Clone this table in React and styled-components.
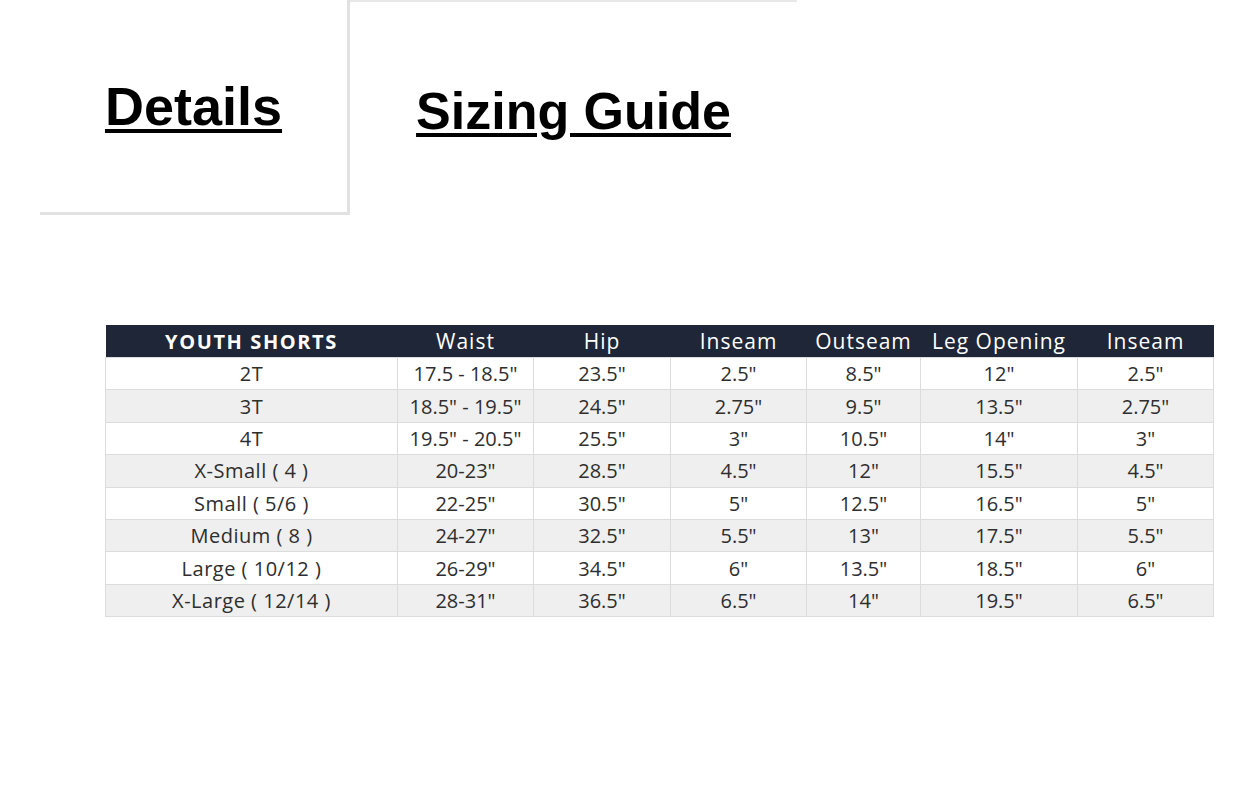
import styled, { createGlobalStyle } from "styled-components";

const columns = [
	{ label: "YOUTH SHORTS", width: 292, strong: true },
	{ label: "Waist", width: 136 },
	{ label: "Hip", width: 137 },
	{ label: "Inseam", width: 136 },
	{ label: "Outseam", width: 114 },
	{ label: "Leg Opening", width: 157 },
	{ label: "Inseam", width: 136 },
];

const rows = [
	["2T", "17.5 - 18.5\"", "23.5\"", "2.5\"", "8.5\"", "12\"", "2.5\""],
	["3T", "18.5\" - 19.5\"", "24.5\"", "2.75\"", "9.5\"", "13.5\"", "2.75\""],
	["4T", "19.5\" - 20.5\"", "25.5\"", "3\"", "10.5\"", "14\"", "3\""],
	["X-Small ( 4 )", "20-23\"", "28.5\"", "4.5\"", "12\"", "15.5\"", "4.5\""],
	["Small ( 5/6 )", "22-25\"", "30.5\"", "5\"", "12.5\"", "16.5\"", "5\""],
	["Medium ( 8 )", "24-27\"", "32.5\"", "5.5\"", "13\"", "17.5\"", "5.5\""],
	["Large ( 10/12 )", "26-29\"", "34.5\"", "6\"", "13.5\"", "18.5\"", "6\""],
	["X-Large ( 12/14 )", "28-31\"", "36.5\"", "6.5\"", "14\"", "19.5\"", "6.5\""],
];

export default function App() {
	return (
		<>
			<GlobalStyle />
			<Page>
				<Tabs>
					<Tab $active>
						<TabLabel $size={54}>Details</TabLabel>
					</Tab>
					<Tab>
						<TabLabel $size={52} $low>Sizing Guide</TabLabel>
					</Tab>
				</Tabs>
				<SizeTable>
					<colgroup>
						{columns.map((col, index) => (
							<col key={index} style={{ width: col.width }} />
						))}
					</colgroup>
					<thead>
						<tr>
							{columns.map((col, index) => (
								<HeadCell key={index} $strong={col.strong}>{col.label}</HeadCell>
							))}
						</tr>
					</thead>
					<tbody>
						{rows.map((row, index) => (
							<Row key={index} $shaded={index % 2 === 1}>
								{row.map((value, i) => (
									<Cell key={i} $label={i === 0}>{value}</Cell>
								))}
							</Row>
						))}
					</tbody>
				</SizeTable>
			</Page>
		</>
	)
}

const GlobalStyle = createGlobalStyle`
	body {
		margin: 0;
		background: #fff;
		font-family: "Open Sans", "Liberation Sans", sans-serif;
	}
`

const Page = styled.div`
	width: 1250px;
	height: 807px;
	overflow: hidden;
`

const Tabs = styled.div`
	display: flex;
	margin-left: 40px;
`

const Tab = styled.div`
	box-sizing: border-box;
	display: flex;
	align-items: center;
	justify-content: center;
	width: ${p => p.$active ? "310px" : "447px"};
	height: 215px;
	border-right: ${p => p.$active ? "3px solid #e2e2e2" : "none"};
	border-bottom: ${p => p.$active ? "3px solid #e2e2e2" : "none"};
	border-top: ${p => p.$active ? "none" : "2px solid #e8e8e8"};
`

const TabLabel = styled.h2`
	margin: 0;
	margin-top: ${p => p.$low ? "4px" : "0"};
	font-family: "Liberation Sans", Arial, sans-serif;
	font-weight: 700;
	font-size: ${p => p.$size}px;
	line-height: 1;
	color: #000;
	text-decoration: underline;
	text-decoration-thickness: 4px;
	text-underline-offset: 4px;
`

const SizeTable = styled.table`
	margin: 110px 0 0 105px;
	width: 1108px;
	table-layout: fixed;
	border-collapse: collapse;
	border-bottom: 1px solid #dadada;
`

const HeadCell = styled.th`
	height: 32px;
	padding: 0;
	background: #1f2637;
	color: #fff;
	font-size: ${p => p.$strong ? "20px" : "21px"};
	font-weight: ${p => p.$strong ? 700 : 400};
	letter-spacing: ${p => p.$strong ? "1.6px" : "1px"};
	text-align: center;
	white-space: nowrap;
`

const Row = styled.tr`
	height: 32.4px;
	background: ${p => p.$shaded ? "#efefef" : "#fff"};
`

const Cell = styled.td`
	padding: 0;
	border: 1px solid #dcdcdc;
	color: #2e2e2e;
	font-size: 20px;
	letter-spacing: ${p => p.$label ? "0.5px" : "0"};
	text-align: center;
	white-space: nowrap;
`
